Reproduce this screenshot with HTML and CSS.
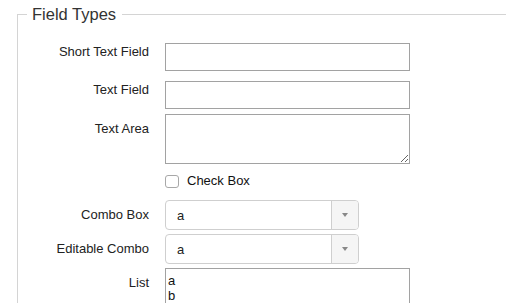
FILE: index.html
```html
<!DOCTYPE html>
<html>
  <head>
    <title>Field Types</title>
    <link rel="stylesheet" href="styles.css">
  </head>

  <body>
    <fieldset class="group">
      <legend class="group_title">Field Types</legend>

      <div class="form">
        <div class="row">
          <label class="row_label">Short Text Field</label>
          <input type="text" class="text_input" />
        </div>
        <div class="row row_gap">
          <label class="row_label">Text Field</label>
          <input type="text" class="text_input" />
        </div>
        <div class="row row_tight">
          <label class="row_label row_label_low">Text Area</label>
          <textarea class="text_area"></textarea>
        </div>
        <div class="row row_check">
          <span></span>
          <label class="check">
            <input type="checkbox" class="check_box" />
            <span>Check Box</span>
          </label>
        </div>
        <div class="row row_combo">
          <label class="row_label row_label_low">Combo Box</label>
          <div class="combo">
            <span class="combo_value">a</span>
            <span class="combo_button"><i class="arrow"></i></span>
          </div>
        </div>
        <div class="row row_small">
          <label class="row_label row_label_low">Editable Combo</label>
          <div class="combo">
            <span class="combo_value">a</span>
            <span class="combo_button"><i class="arrow"></i></span>
          </div>
        </div>
        <div class="row row_small">
          <label class="row_label row_label_low">List</label>
          <div class="list">
            <div>a</div>
            <div>b</div>
          </div>
        </div>
      </div>
    </fieldset>
  </body>
</html>
```

FILE: styles.css
```css
* {
  box-sizing: border-box;
}

body {
  margin: 0;
  overflow: hidden;
  background: #fff;
  font-family: "Liberation Sans", Arial, sans-serif;
  font-size: 13px;
  color: #222;
}

.group {
  margin: 3px 0 0 17px;
  padding: 0;
  width: 489px;
  border: 1px solid #d4d4d4;
  border-right: none;
  border-bottom: none;
}

.group_title {
  margin-left: 9px;
  padding: 0 6px 0 5px;
  font-size: 16.5px;
  line-height: 22px;
  color: #333;
}

.form {
  display: flex;
  flex-direction: column;
  padding-top: 18px;
}

.row {
  display: grid;
  grid-template-columns: 131px 245px;
  column-gap: 16px;
  align-items: start;
}

.row_gap {
  margin-top: 10px;
}

.row_tight {
  margin-top: 5px;
}

.row_check {
  margin-top: 8px;
}

.row_combo {
  margin-top: 10px;
}

.row_small {
  margin-top: 4px;
}

.row_label {
  text-align: right;
  line-height: 18px;
  padding-top: 0;
}

.row_label_low {
  padding-top: 6px;
}

.text_input {
  width: 245px;
  height: 28px;
  margin: 0;
  border: 1px solid #a2a2a2;
  background: #fff;
}

.text_area {
  display: block;
  width: 245px;
  height: 50px;
  margin: 0;
  border: 1px solid #a2a2a2;
  resize: vertical;
}

.check {
  display: flex;
  align-items: center;
  gap: 8px;
  line-height: 18px;
  color: #111;
}

.check_box {
  appearance: none;
  margin: 0;
  width: 14px;
  height: 13px;
  border: 1px solid #a8a8a8;
  border-radius: 3px;
  background: #fff;
}

.combo {
  display: flex;
  width: 194px;
  height: 30px;
  border: 1px solid #cfcfcf;
  border-radius: 4px;
  overflow: hidden;
}

.combo_value {
  flex: 1;
  padding-left: 11px;
  line-height: 29px;
  color: #222;
}

.combo_button {
  display: flex;
  align-items: center;
  justify-content: center;
  width: 27px;
  background: #f5f5f5;
  border-left: 1px solid #cfcfcf;
}

.arrow {
  width: 0;
  height: 0;
  border-left: 3.5px solid transparent;
  border-right: 3.5px solid transparent;
  border-top: 4px solid #888;
}

.list {
  width: 245px;
  height: 38px;
  padding: 4px 2px 0;
  border: 1px solid #a2a2a2;
  border-bottom: none;
  line-height: 15px;
  color: #111;
}
```
